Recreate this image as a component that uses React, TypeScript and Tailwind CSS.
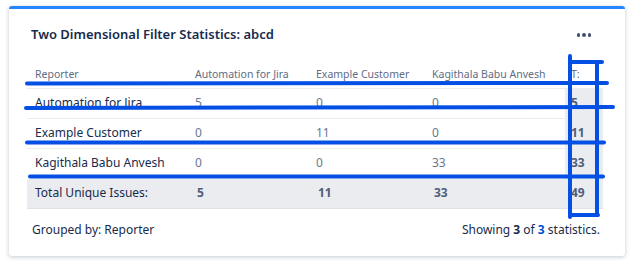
const rows = [
  { name: 'Automation for Jira', values: [5, 0, 0], total: 5 },
  { name: 'Example Customer', values: [0, 11, 0], total: 11 },
  { name: 'Kagithala Babu Anvesh', values: [0, 0, 33], total: 33 },
];

const columns = ['Automation for Jira', 'Example Customer', 'Kagithala Babu Anvesh'];

function Annotations() {
  // hand-drawn blue marks on top of the gadget
  return (
    <svg
      className="pointer-events-none absolute left-0 top-0"
      width="642"
      height="267"
      viewBox="0 0 642 267"
      fill="none"
      stroke="#0450e4"
      strokeWidth="4"
      strokeLinecap="round"
    >
      <path d="M27 83.5 L607 83" />
      <path d="M26 108 L613 107" />
      <path d="M27 142.5 L604 142.5" />
      <path d="M30 176.5 L603 176.5" />
      <path d="M570 56 L570 217" />
      <path d="M597 63 L597 215" />
      <path d="M570 62 L602 62" />
      <path d="M570 215 L598 215" />
    </svg>
  );
}

export default function App() {
  return (
    <div
      className="relative h-[267px] w-[642px] bg-white"
      style={{ fontFamily: '"Noto Sans", "Open Sans", sans-serif' }}
    >
      <div className="absolute left-[9px] top-[6px] h-[250px] w-[616px] rounded-[3px] border-t-[3px] border-[#2684ff] bg-white shadow-[0_1px_4px_rgba(9,30,66,0.25)]">
        <div className="flex items-center justify-between pl-[22px] pr-[34px] pt-[16px]">
          <h1 className="text-[13px] font-semibold text-[#172b4d]">
            Two Dimensional Filter Statistics: abcd
          </h1>
          <div className="flex gap-[2px]">
            <span className="h-[3.5px] w-[3.5px] rounded-full bg-[#42526e]" />
            <span className="h-[3.5px] w-[3.5px] rounded-full bg-[#42526e]" />
            <span className="h-[3.5px] w-[3.5px] rounded-full bg-[#42526e]" />
          </div>
        </div>

        <table className="ml-[18px] mt-[17px] w-[576px] table-fixed border-collapse text-left">
          <colgroup>
            <col className="w-[160px]" />
            <col className="w-[121px]" />
            <col className="w-[116px]" />
            <col className="w-[141px]" />
            <col className="w-[38px]" />
          </colgroup>
          <thead>
            <tr className="h-[27px] text-[10.5px] text-[#5e6c84]">
              <th className="px-[8px] font-normal">Reporter</th>
              {columns.map((c) => (
                <th key={c} className="px-[8px] font-normal">
                  {c}
                </th>
              ))}
              <th className="pl-[6px] font-normal">T:</th>
            </tr>
          </thead>
          <tbody>
            {rows.map((r) => (
              <tr key={r.name} className="h-[30px] border-t border-[#ebecf0] text-[12px]">
                <td className="px-[8px] pb-[1px] text-[#172b4d]">{r.name}</td>
                {r.values.map((v, i) => (
                  <td key={i} className="px-[8px] pb-[1px] text-[#6b778c]">
                    {v}
                  </td>
                ))}
                <td className="bg-[#ebecf0] pb-[1px] pl-[6px] font-bold text-[#505f79]">{r.total}</td>
              </tr>
            ))}
            <tr className="h-[30px] border-b border-[#dfe1e6] bg-[#ebecf0] text-[12px]">
              <td className="px-[8px] text-[#172b4d]">Total Unique Issues:</td>
              <td className="px-[8px] pl-[10px] font-bold text-[#505f79]">5</td>
              <td className="px-[8px] pl-[10px] font-bold text-[#505f79]">11</td>
              <td className="px-[8px] pl-[10px] font-bold text-[#505f79]">33</td>
              <td className="pl-[6px] font-bold text-[#505f79]">49</td>
            </tr>
          </tbody>
        </table>

        <div className="flex items-center justify-between pl-[23px] pr-[25px] pt-[12px] text-[12px] text-[#172b4d]">
          <span>Grouped by: Reporter</span>
          <span>
            Showing <b className="font-bold">3</b> of{' '}
            <b className="font-bold text-[#0052cc]">3</b> statistics.
          </span>
        </div>
      </div>
      <Annotations />
    </div>
  );
}
